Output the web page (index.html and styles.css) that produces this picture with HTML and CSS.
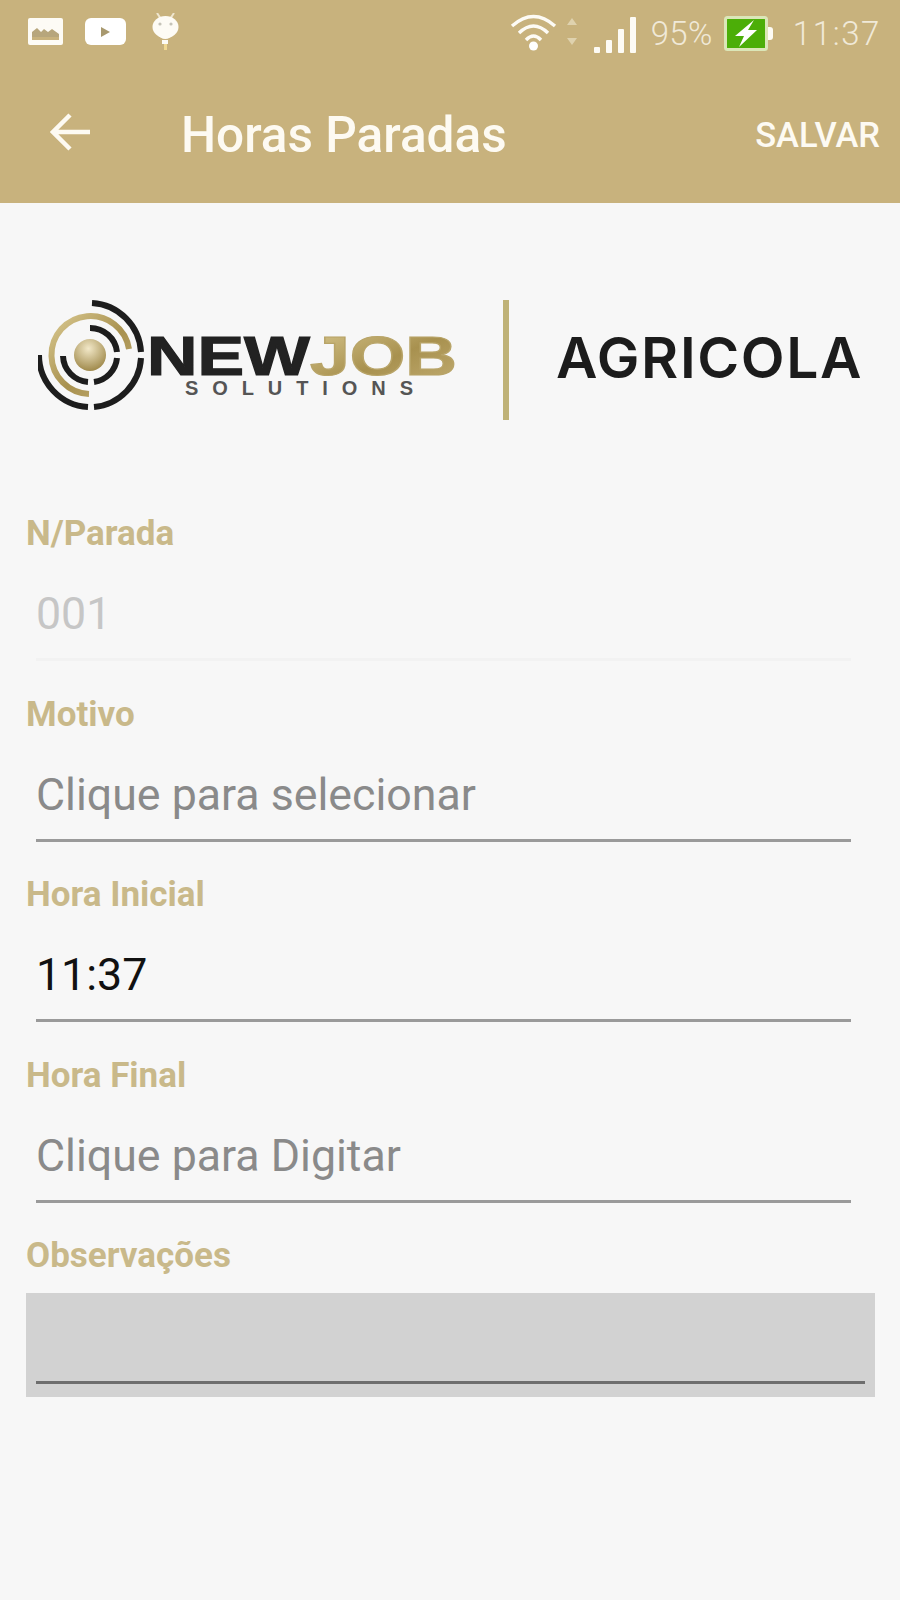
FILE: index.html
```html
<!DOCTYPE html>
<html lang="pt-BR">
<head>
  <meta charset="UTF-8">
  <title>Horas Paradas</title>
  <link rel="stylesheet" href="styles.css">
</head>
<body>
  <header class="header">
    <div class="status">
      <div class="status-left">
        <svg class="ic-photo" width="35" height="27" viewBox="0 0 35 27">
          <rect width="35" height="27" rx="2" fill="#fdfbf5"/>
          <path d="M4 22V14l5-4 4 4 3-3 4 3 4-3 7 5v6z" fill="#b7a67c"/>
          <path d="M4 22h27v-3H4z" fill="#c8b27d"/>
        </svg>
        <svg class="ic-yt" width="41" height="27" viewBox="0 0 41 27">
          <rect width="41" height="27" rx="6" fill="#fff"/>
          <path d="M16 9l9 5-9 5z" fill="#a8996f"/>
        </svg>
        <svg class="ic-bug" width="27" height="37" viewBox="0 0 27 37">
          <path d="M5 0l4 6M22 0l-4 6" stroke="#efe6cf" stroke-width="2"/>
          <ellipse cx="13.5" cy="14" rx="13" ry="11" fill="#fdfbf5"/>
          <path d="M4 20q9 12 19 0z" fill="#fdfbf5"/>
          <circle cx="8" cy="11" r="1.6" fill="#c5c3b8"/>
          <circle cx="19" cy="11" r="1.6" fill="#c5c3b8"/>
          <rect x="10" y="27" width="6" height="4" fill="#fdfbf5"/>
          <rect x="12" y="31" width="3" height="6" fill="#f0d890"/>
        </svg>
      </div>
      <div class="status-right">
        <svg class="ic-wifi" width="47" height="38" viewBox="0 0 47 38">
          <g fill="none" stroke="#fdfbf5" stroke-width="3.4">
            <path d="M2 13Q23.500 -6 45 13"/>
            <path d="M9 20Q23.500 6 38 20"/>
            <path d="M16 27Q23.500 19 31 27"/>
          </g>
          <circle cx="23.500" cy="33" r="4.500" fill="#fff"/>
        </svg>
        <svg class="ic-arrows" width="10" height="27" viewBox="0 0 10 27">
          <path d="M5 0l5 7H0zM5 27l5-7H0z" fill="#dfd2ae"/>
        </svg>
        <svg class="ic-signal" width="43" height="36" viewBox="0 0 43 36">
          <g fill="#fdfbf5">
            <rect x="0" y="30" width="6" height="6" rx="1"/>
            <rect x="12" y="23" width="6" height="13" rx="1"/>
            <rect x="24" y="12" width="6" height="24" rx="1"/>
            <rect x="36" y="0" width="6" height="36" rx="1"/>
          </g>
        </svg>
        <span class="status-text pct">95%</span>
        <svg class="ic-batt" width="49" height="35" viewBox="0 0 49 35">
          <rect x="1.500" y="1.500" width="41" height="32" rx="2" fill="#4cae08" stroke="#dbe6b8" stroke-width="3"/>
          <path d="M44 11h2q3 0 3 3v7q0 3-3 3h-2z" fill="#fdfbf5"/>
          <path d="M30 4L11 20h9l-5 11L33 14h-9z" fill="#fff"/>
        </svg>
        <span class="status-text time">11:37</span>
      </div>
    </div>
    <div class="toolbar">
      <svg class="ic-back" width="40" height="38" viewBox="0 0 40 38">
        <path d="M40 19H3M20 2L3 19l17 17" fill="none" stroke="#fdfaf2" stroke-width="4.500"/>
      </svg>
      <h1 class="title">Horas Paradas</h1>
      <span class="save">SALVAR</span>
    </div>
  </header>

  <div class="brand">
    <svg class="brand-logo" width="425" height="112" viewBox="0 0 425 112">
      <defs>
        <linearGradient id="gold" x1="0" y1="0" x2="1" y2="1">
          <stop offset="0" stop-color="#d9c88f"/>
          <stop offset="0.55" stop-color="#a8914f"/>
          <stop offset="1" stop-color="#c2ad72"/>
        </linearGradient>
        <radialGradient id="ball" cx="0.45" cy="0.3" r="0.7">
          <stop offset="0" stop-color="#f2e8c8"/>
          <stop offset="1" stop-color="#a08a4c"/>
        </radialGradient>
      </defs>
      <g fill="none" stroke-width="6">
        <path d="M54 3A52 52 0 0 1 103 52M103 58A52 52 0 0 1 56 107M50 107A52 52 0 0 1 1 55" stroke="#1d1d1d"/>
        <path d="M91 49A39 39 0 1 0 51 94" stroke="url(#gold)"/>
        <path d="M52 28A27 27 0 0 1 79 52M79 58A27 27 0 0 1 56 82M50 82A27 27 0 0 1 25 56" stroke="#1d1d1d"/>
      </g>
      <circle cx="52" cy="55" r="16" fill="url(#ball)"/>
      <text class="logo-word" x="109" y="75" textLength="163" lengthAdjust="spacingAndGlyphs" fill="#222" stroke="#222">NEW</text>
      <text class="logo-word" x="272" y="75" textLength="147" lengthAdjust="spacingAndGlyphs" fill="url(#gold)" stroke="#b8a468">JOB</text>
      <text class="logo-sub" x="147" y="95" textLength="228" fill="#555">SOLUTIONS</text>
    </svg>
    <div class="brand-bar"></div>
    <div class="brand-name">AGRICOLA</div>
  </div>

  <form class="form">
    <div class="field">
      <div class="label">N/Parada</div>
      <div class="value disabled">001</div>
    </div>
    <div class="field">
      <div class="label">Motivo</div>
      <div class="value hint">Clique para selecionar</div>
    </div>
    <div class="field">
      <div class="label">Hora Inicial</div>
      <div class="value">11:37</div>
    </div>
    <div class="field">
      <div class="label">Hora Final</div>
      <div class="value hint">Clique para Digitar</div>
    </div>
    <div class="field">
      <div class="label">Observações</div>
      <div class="notes"><div class="notes-line"></div></div>
    </div>
  </form>
</body>
</html>
```

FILE: styles.css
```css
body { margin: 0; background: #f7f7f7; font-family: Roboto, "Liberation Sans", sans-serif; }

.header { height: 203px; background: #c8b27d; color: #fdfaf2; }
.status { height: 76px; display: flex; justify-content: space-between; padding: 13px 19px 0 28px; box-sizing: border-box; }
.status-left { display: flex; align-items: flex-start; }
.status-right { display: flex; align-items: flex-start; }
.ic-photo { margin-top: 5px; }
.ic-yt { margin: 5px 26px 0 22px; }
.ic-arrows { margin: 5px 17px 0 10px; }
.ic-signal { margin-top: 4px; }
.status-text { font-size: 33px; line-height: 38px; font-weight: 300; color: #f0e9d8; margin-top: 2px; }
.pct { margin: 2px 11px 0 14px; letter-spacing: 0.4px; }
.ic-batt { margin-top: 3px; }
.time { margin-left: 20px; letter-spacing: 1.6px; }

.toolbar { height: 127px; display: flex; align-items: flex-start; padding: 37px 20px 0 50px; box-sizing: border-box; }
.ic-back { flex: none; }
.title { margin: -6px 0 0 91px; font-size: 49.500px; line-height: 56px; font-weight: 500; flex: 1; }
.save { font-size: 34.500px; line-height: 40px; font-weight: 500; margin-top: 2px; }

.brand { display: flex; align-items: center; height: 120px; margin-top: 97px; padding-left: 38px; }
.brand-logo { flex: none; margin: 0 40px 8px 0; }
.logo-word { font-family: "Liberation Sans", sans-serif; font-weight: 700; font-size: 56px; stroke-width: 1.2px; }
.logo-sub { font-family: "Liberation Sans", sans-serif; font-weight: 700; font-size: 20px; }
.brand-bar { width: 6px; height: 120px; background: #bfb277; }
.brand-name { margin: 0 0 6px 47px; font-family: Inter, sans-serif; font-size: 57px; letter-spacing: 1.600px; font-weight: 600; color: #1c1c1c; }

.form { display: flex; flex-direction: column; padding: 96px 25px 0 26px; }
.field { height: 180.5px; }
.label { font-size: 35px; line-height: 36px; font-weight: 700; color: #c9b98a; }
.value { margin: 0 24px 0 10px; height: 109px; padding-top: 36px; box-sizing: border-box; border-bottom: 3px solid #9a9a9a; font-size: 44.700px; line-height: 52px; color: #111; }
.hint { color: #8a8a8a; }
.disabled { color: #c6c6c6; border-bottom-color: #f2f2f2; }
.notes { margin-top: 19px; height: 104px; background: #d2d2d2; padding: 88px 10px 0 10px; box-sizing: border-box; }
.notes-line { height: 3px; background: #6e6e6e; }
```
